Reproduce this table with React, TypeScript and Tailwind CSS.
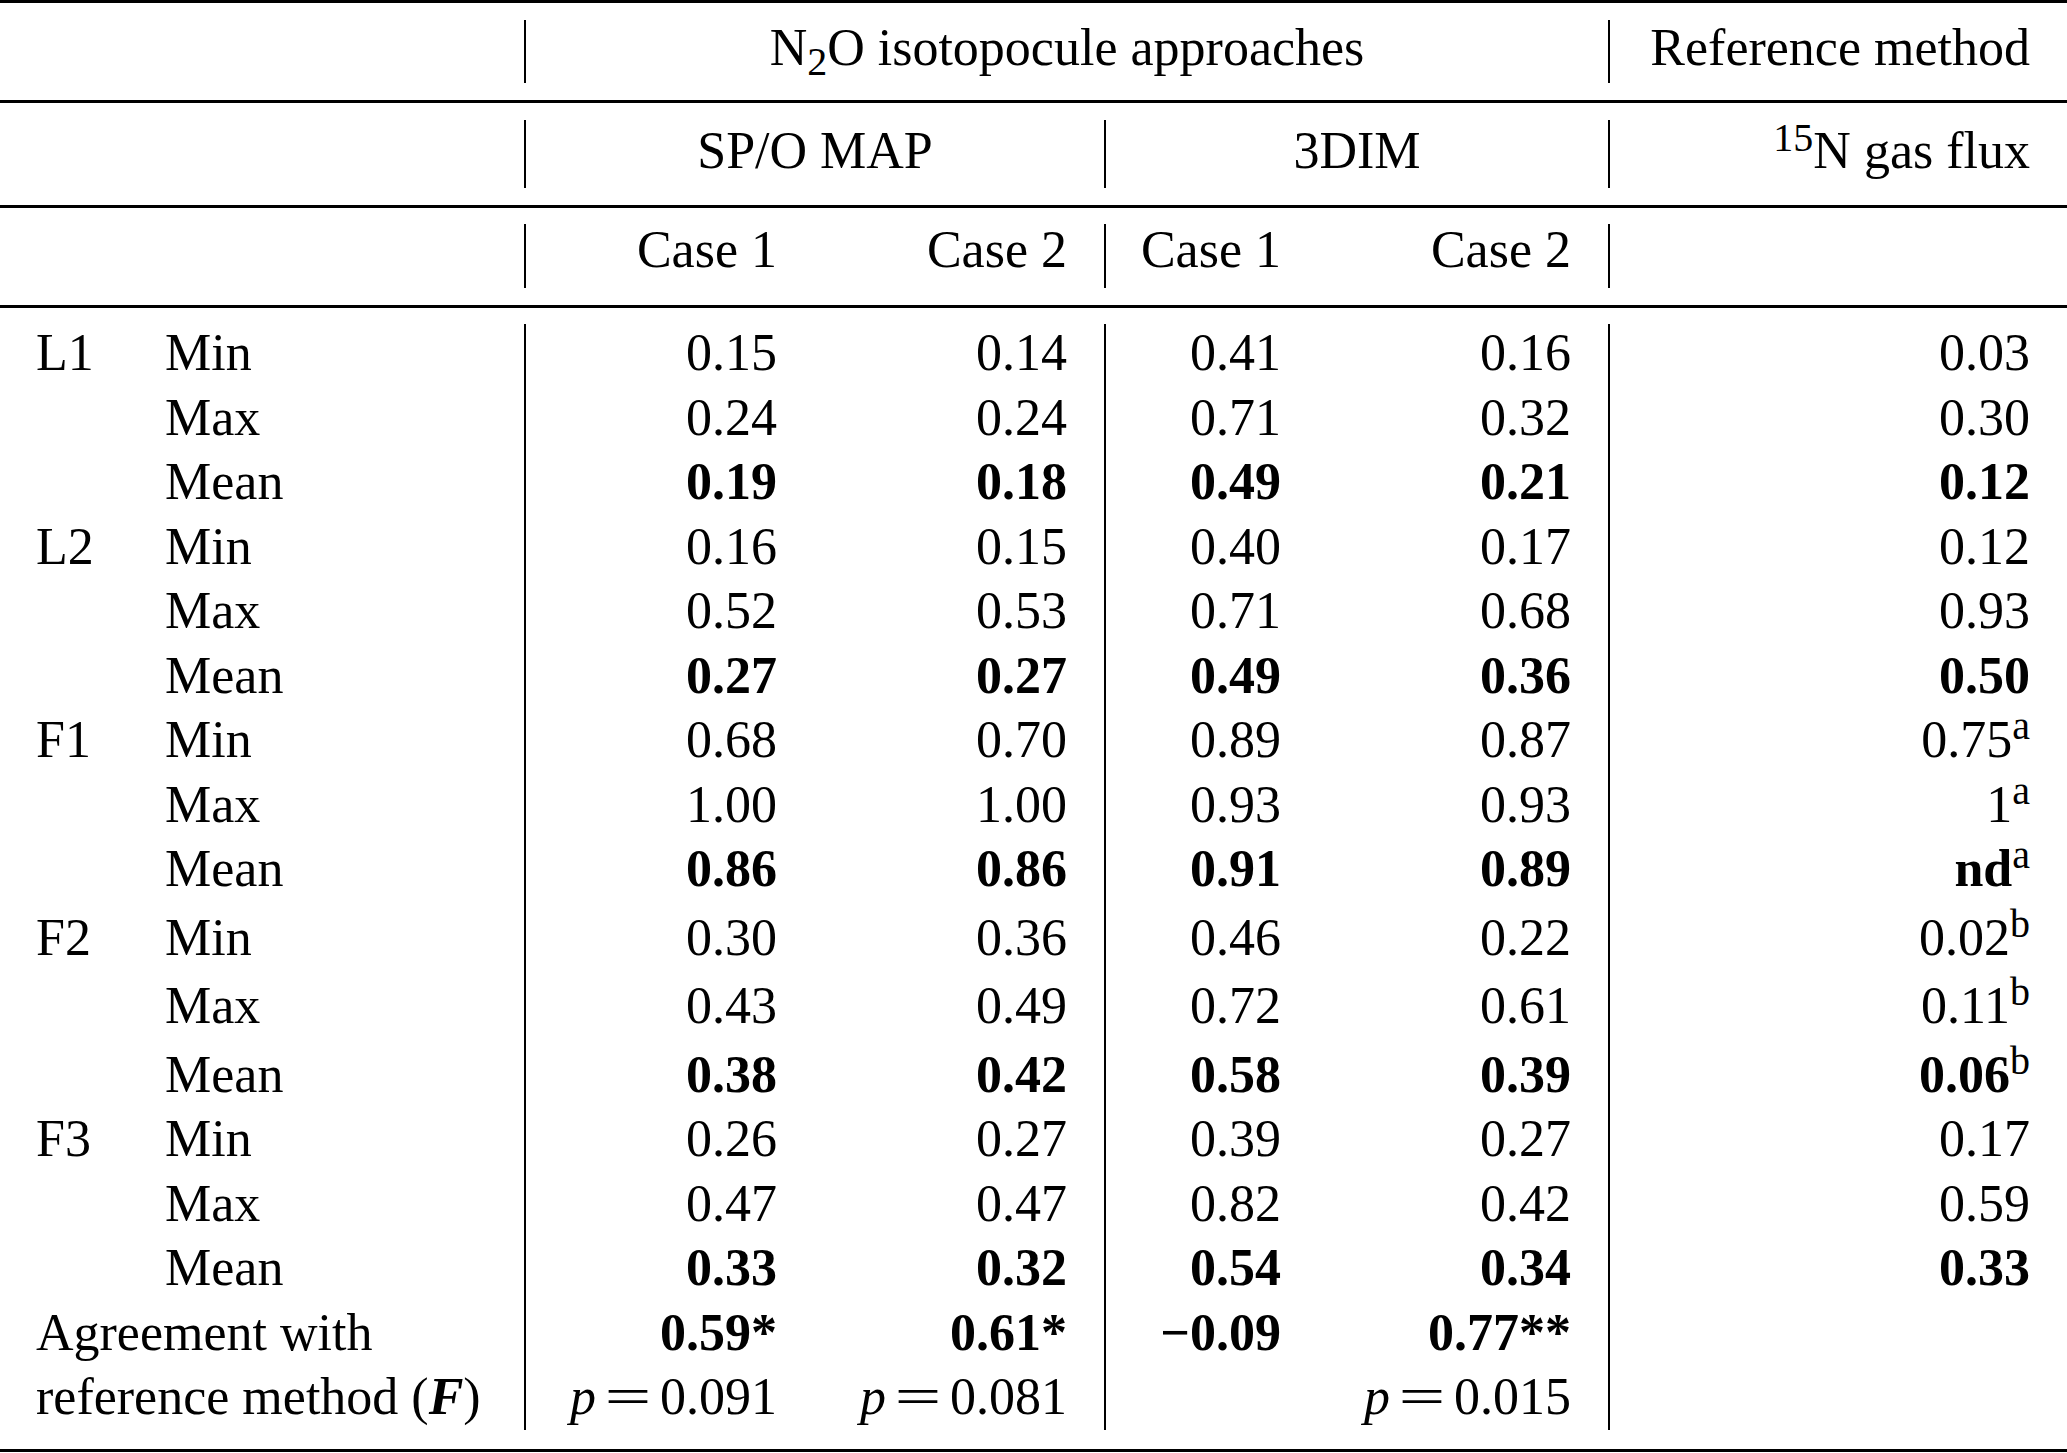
import React from "react";

type Cell = { v: string; sup?: string; bold?: boolean };

const Sep = ({ cls }: { cls: string }) => <div className={"w-[2px] shrink-0 bg-black " + cls} />;

const Sup = ({ t }: { t: string }) => (
  <span className="relative -top-[18px] text-[40px] font-normal">{t}</span>
);

const Eq = () => (
  <span className="inline-block w-[42px] mx-[11px] text-center scale-x-[1.6]">=</span>
);

const P = ({ v }: { v: string }) => (
  <span>
    <i>p</i>
    <Eq />
    {v}
  </span>
);

type Row = { g: string; l: string; vals: (Cell | null)[]; tall?: boolean };

const mk = (vals: (string | [string, string])[], bold: boolean): Cell[] =>
  vals.map((x) => (Array.isArray(x) ? { v: x[0], sup: x[1], bold } : { v: x, bold }));

const rows: Row[] = [
  { g: "L1", l: "Min", vals: mk(["0.15", "0.14", "0.41", "0.16", "0.03"], false) },
  { g: "", l: "Max", vals: mk(["0.24", "0.24", "0.71", "0.32", "0.30"], false) },
  { g: "", l: "Mean", vals: mk(["0.19", "0.18", "0.49", "0.21", "0.12"], true) },
  { g: "L2", l: "Min", vals: mk(["0.16", "0.15", "0.40", "0.17", "0.12"], false) },
  { g: "", l: "Max", vals: mk(["0.52", "0.53", "0.71", "0.68", "0.93"], false) },
  { g: "", l: "Mean", vals: mk(["0.27", "0.27", "0.49", "0.36", "0.50"], true) },
  { g: "F1", l: "Min", vals: mk(["0.68", "0.70", "0.89", "0.87", ["0.75", "a"]], false) },
  { g: "", l: "Max", vals: mk(["1.00", "1.00", "0.93", "0.93", ["1", "a"]], false) },
  { g: "", l: "Mean", vals: mk(["0.86", "0.86", "0.91", "0.89", ["nd", "a"]], true) },
  { g: "F2", l: "Min", vals: mk(["0.30", "0.36", "0.46", "0.22", ["0.02", "b"]], false), tall: true },
  { g: "", l: "Max", vals: mk(["0.43", "0.49", "0.72", "0.61", ["0.11", "b"]], false), tall: true },
  { g: "", l: "Mean", vals: mk(["0.38", "0.42", "0.58", "0.39", ["0.06", "b"]], true), tall: true },
  { g: "F3", l: "Min", vals: mk(["0.26", "0.27", "0.39", "0.27", "0.17"], false) },
  { g: "", l: "Max", vals: mk(["0.47", "0.47", "0.82", "0.42", "0.59"], false) },
  { g: "", l: "Mean", vals: mk(["0.33", "0.32", "0.54", "0.34", "0.33"], true) },
];

const rowCls = (tall?: boolean) => (tall ? "h-[68.5px] pt-[4px]" : "h-[64.5px]");

const ValCell = ({ c, tall }: { c: Cell | null; tall?: boolean }) => (
  <div className={"pr-[37px] text-right whitespace-nowrap " + rowCls(tall)}>
    {c ? (
      <>
        <span className={c.bold ? "font-bold" : ""}>{c.v}</span>
        {c.sup ? <Sup t={c.sup} /> : null}
      </>
    ) : null}
  </div>
);

const Col = ({
  w,
  idx,
  extra,
}: {
  w: string;
  idx: number;
  extra: [React.ReactNode, React.ReactNode];
}) => (
  <div className={"flex flex-col shrink-0 " + w}>
    {rows.map((r, i) => (
      <ValCell key={i} c={r.vals[idx]} tall={r.tall} />
    ))}
    <div className="h-[64.5px] pr-[37px] text-right whitespace-nowrap">{extra[0]}</div>
    <div className="h-[64.5px] pr-[37px] text-right whitespace-nowrap">{extra[1]}</div>
  </div>
);

export default function App() {
  return (
    <div className="w-[2067px] h-[1453px] bg-white text-black font-['Liberation_Serif',serif] text-[52px] leading-[64.5px] overflow-hidden">
      <div className="h-[3px] bg-black" />
      {/* Header row 1 */}
      <div className="flex h-[97px]">
        <div className="w-[524px] shrink-0" />
        <Sep cls="mt-[17px] h-[63px]" />
        <div className="w-[1082px] shrink-0 pt-[13px] text-center whitespace-nowrap">
          N<span className="relative top-[10px] text-[40px]">2</span>O isotopocule approaches
        </div>
        <Sep cls="mt-[17px] h-[63px]" />
        <div className="w-[457px] shrink-0 pt-[13px] pr-[37px] text-right whitespace-nowrap">
          Reference method
        </div>
      </div>
      <div className="h-[3px] bg-black" />
      {/* Header row 2 */}
      <div className="flex h-[102px]">
        <div className="w-[524px] shrink-0" />
        <Sep cls="mt-[17px] h-[68px]" />
        <div className="w-[578px] shrink-0 pt-[16px] text-center whitespace-nowrap">SP/O MAP</div>
        <Sep cls="mt-[17px] h-[68px]" />
        <div className="w-[502px] shrink-0 pt-[16px] text-center whitespace-nowrap">3DIM</div>
        <Sep cls="mt-[17px] h-[68px]" />
        <div className="w-[457px] shrink-0 pt-[16px] pr-[37px] text-right whitespace-nowrap">
          <span className="relative -top-[17px] text-[40px]">15</span>N gas flux
        </div>
      </div>
      <div className="h-[3px] bg-black" />
      {/* Header row 3 */}
      <div className="flex h-[97px]">
        <div className="w-[524px] shrink-0" />
        <Sep cls="mt-[16px] h-[64px]" />
        <div className="w-[288px] shrink-0 pt-[10px] pr-[37px] text-right whitespace-nowrap">Case 1</div>
        <div className="w-[290px] shrink-0 pt-[10px] pr-[37px] text-right whitespace-nowrap">Case 2</div>
        <Sep cls="mt-[16px] h-[64px]" />
        <div className="w-[212px] shrink-0 pt-[10px] pr-[37px] text-right whitespace-nowrap">Case 1</div>
        <div className="w-[290px] shrink-0 pt-[10px] pr-[37px] text-right whitespace-nowrap">Case 2</div>
        <Sep cls="mt-[16px] h-[64px]" />
        <div className="w-[457px] shrink-0" />
      </div>
      <div className="h-[3px] bg-black" />
      {/* Body */}
      <div className="flex mt-[13px] pb-[4px]">
        <div className="flex flex-col w-[524px] shrink-0">
          {rows.map((r, i) => (
            <div key={i} className={"flex pl-[36px] " + rowCls(r.tall)}>
              <div className="w-[129px] shrink-0">{r.g}</div>
              <div>{r.l}</div>
            </div>
          ))}
          <div className="h-[64.5px] pl-[36px] whitespace-nowrap">Agreement with</div>
          <div className="h-[64.5px] pl-[36px] whitespace-nowrap">
            reference method (<b>
              <i>F</i>
            </b>
            )
          </div>
        </div>
        <Sep cls="mt-[3px]" />
        <Col w="w-[288px]" idx={0} extra={[<b key="a">0.59*</b>, <P key="b" v="0.091" />]} />
        <Col w="w-[290px]" idx={1} extra={[<b key="a">0.61*</b>, <P key="b" v="0.081" />]} />
        <Sep cls="mt-[3px]" />
        <Col w="w-[212px]" idx={2} extra={[<b key="a">−0.09</b>, null]} />
        <Col w="w-[290px]" idx={3} extra={[<b key="a">0.77**</b>, <P key="b" v="0.015" />]} />
        <Sep cls="mt-[3px]" />
        <Col w="w-[457px]" idx={4} extra={[null, null]} />
      </div>
      <div className="mt-[15.5px] h-[3px] bg-black" />
    </div>
  );
}
